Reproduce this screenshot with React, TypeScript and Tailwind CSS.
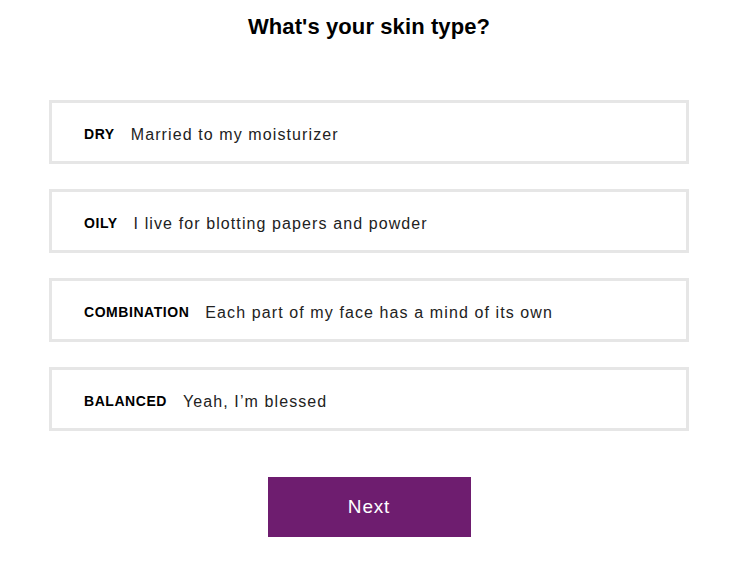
import React from "react";

// ── Opciones de tipo de piel ────────────────────────────────────────────────
const options = [
  { label: "DRY", desc: "Married to my moisturizer" },
  { label: "OILY", desc: "I live for blotting papers and powder" },
  { label: "COMBINATION", desc: "Each part of my face has a mind of its own" },
  { label: "BALANCED", desc: "Yeah, I’m blessed" },
];

export default function App() {
  return (
    <div className="min-h-[568px] w-[749px] bg-white font-['Liberation_Sans',Arial,sans-serif] text-[#111]">
      <div className="ml-[49px] flex w-[640px] flex-col items-center">
        <h1 className="mt-[13px] h-[28px] text-[22px] font-bold leading-[28px] tracking-[0.1px] text-black">
          What's your skin type?
        </h1>

        <ul className="mt-[59px] flex w-full flex-col gap-[25px]">
          {options.map(o => (
            <li
              key={o.label}
              className="flex h-[64px] items-center border-[3px] border-[#e6e6e6] bg-white pl-[32px] pt-[5px]"
            >
              <span className="text-[14px] font-bold tracking-[0.55px] text-black">{o.label}</span>
              <span className="ml-[16px] text-[16px] tracking-[1.1px] text-[#222]">{o.desc}</span>
            </li>
          ))}
        </ul>

        <button className="mt-[46px] flex h-[60px] w-[203px] items-center justify-center bg-[#6e1d6f] text-[19px] tracking-[0.8px] text-white">
          Next
        </button>
      </div>
    </div>
  );
}
